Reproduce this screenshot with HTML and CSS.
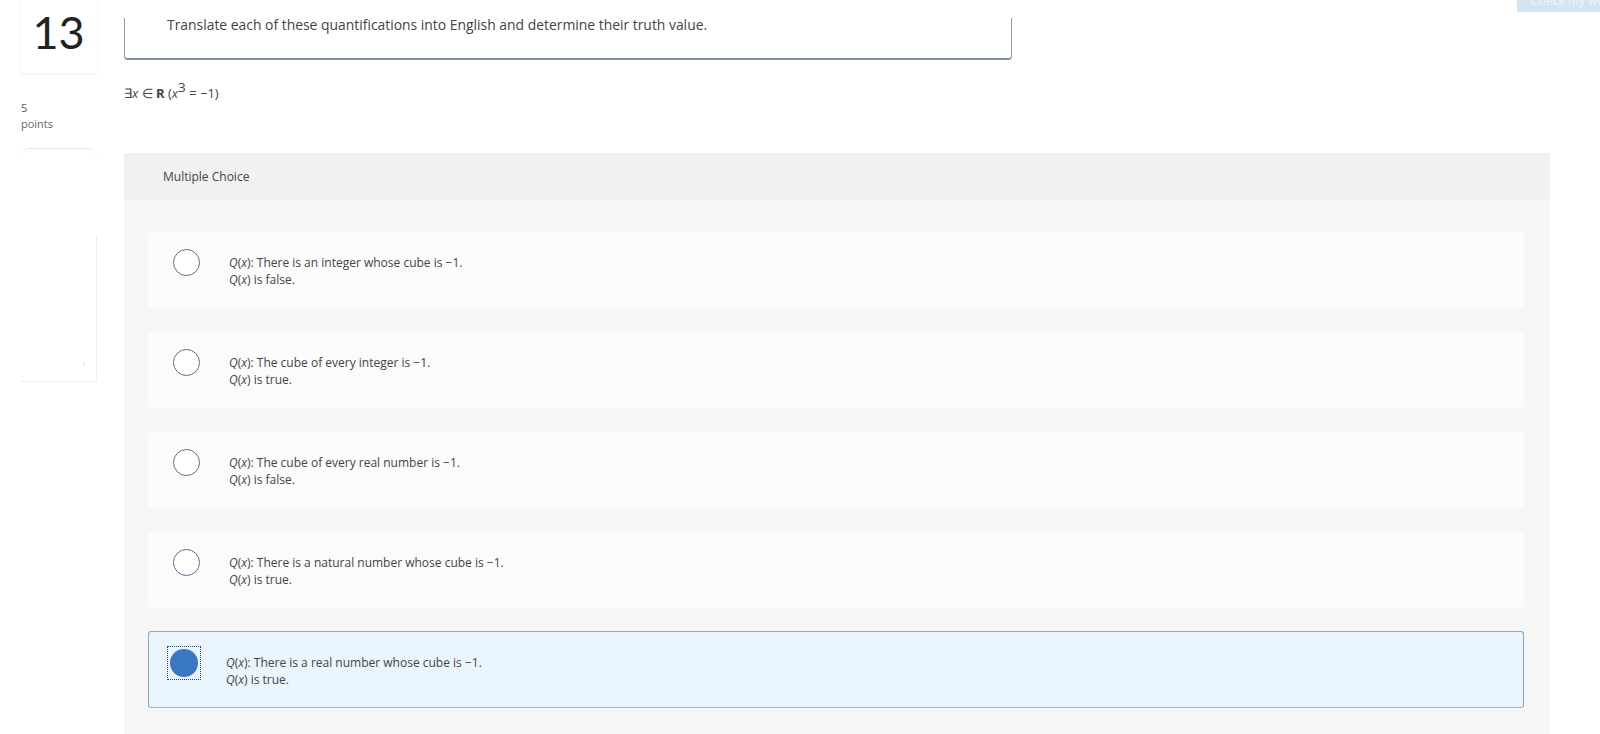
FILE: index.html
```html
<!DOCTYPE html>
<html>
<head>
<meta charset="utf-8">
<link rel="stylesheet" href="styles.css">
</head>
<body>
<div class="topbtn">Check my work</div>
<div class="page">
  <aside class="side">
    <div class="numbox">13</div>
    <div class="pts"><div class="pts-n">5</div><div class="pts-l">points</div></div>
    <div class="arc"></div>
    <div class="navbox"><span class="chev">‹</span></div>
  </aside>
  <main class="main">
    <div class="qbox">Translate each of these quantifications into English and determine their truth value.</div>
    <div class="math">∃<i>x</i> ∈ <b>R</b> (<i>x</i><sup>3</sup> = −1)</div>
    <section class="panel">
      <div class="panel-head">Multiple Choice</div>
      <div class="panel-body">
        <div class="opt">
          <span class="radio"></span>
          <div class="otext"><div><i>Q</i>(<i>x</i>): There is an integer whose cube is −1.</div><div><i>Q</i>(<i>x</i>) is false.</div></div>
        </div>
        <div class="opt">
          <span class="radio"></span>
          <div class="otext"><div><i>Q</i>(<i>x</i>): The cube of every integer is −1.</div><div><i>Q</i>(<i>x</i>) is true.</div></div>
        </div>
        <div class="opt">
          <span class="radio"></span>
          <div class="otext"><div><i>Q</i>(<i>x</i>): The cube of every real number is −1.</div><div><i>Q</i>(<i>x</i>) is false.</div></div>
        </div>
        <div class="opt">
          <span class="radio"></span>
          <div class="otext"><div><i>Q</i>(<i>x</i>): There is a natural number whose cube is −1.</div><div><i>Q</i>(<i>x</i>) is true.</div></div>
        </div>
        <div class="opt sel">
          <span class="focus"><span class="radio on"></span></span>
          <div class="otext"><div><i>Q</i>(<i>x</i>): There is a real number whose cube is −1.</div><div><i>Q</i>(<i>x</i>) is true.</div></div>
        </div>
      </div>
    </section>
  </main>
</div>
</body>
</html>
```

FILE: styles.css
```css
html, body {
  margin: 0;
  padding: 0;
  background: #ffffff;
  font-family: "Open Sans", "Liberation Sans", sans-serif;
  color: #333;
  overflow: hidden;
  height: 734px;
}
.topbtn {
  position: absolute;
  top: -10px;
  left: 1517px;
  width: 140px;
  height: 22px;
  background: #d3e4f3;
  color: #eef5fb;
  font-size: 12px;
  line-height: 22px;
  padding-left: 14px;
  white-space: nowrap;
}
.page {
  display: flex;
  align-items: flex-start;
}
.side {
  width: 124px;
  flex: none;
  padding-left: 20px;
  box-sizing: border-box;
}
.numbox {
  width: 77px;
  height: 73px;
  box-sizing: border-box;
  background: #fff;
  box-shadow: 0 1px 3px rgba(0,0,0,0.07);
  border-radius: 0 0 3px 3px;
  font-family: Lato, "Open Sans", sans-serif;
  font-size: 45px;
  font-weight: 400;
  line-height: 64px;
  text-align: center;
  color: #222;
}
.pts {
  margin-top: 27px;
  padding-left: 1px;
  font-size: 11px;
  line-height: 16px;
}
.pts-n { color: #3f5670; }
.pts-l { color: #666; }
.arc {
  margin-top: 16px;
  width: 77px;
  height: 8px;
  border-top: 1px solid #e6e6e6;
  border-radius: 40px 40px 0 0;
}
.navbox {
  margin-top: 78px;
  width: 77px;
  height: 147px;
  box-sizing: border-box;
  border-right: 1px solid #eeeeee;
  border-bottom: 1px solid #eeeeee;
  position: relative;
}
.chev {
  position: absolute;
  left: 63px;
  top: 122px;
  font-size: 8px;
  color: #bbb;
}
.main {
  flex: none;
  width: 1426px;
}
.qbox {
  margin-top: 18px;
  width: 888px;
  height: 42px;
  box-sizing: border-box;
  border: 1px solid #8e9cac;
  border-top: none;
  border-bottom: 2px solid #7d8fa3;
  border-radius: 0 0 4px 4px;
  padding: 0 0 0 42px;
  font-size: 13.9px;
  line-height: 14px;
  color: #444;
}
.math {
  margin-top: 25px;
  font-size: 13px;
  line-height: 16px;
  color: #444;
}
.math b { font-weight: 700; }
.math sup { font-size: 13.5px; line-height: 0; vertical-align: 6px; }
.panel {
  margin-top: 52px;
  background: #f6f6f6;
}
.panel-head {
  height: 47px;
  background: #f1f1f1;
  padding-left: 39px;
  font-size: 12px;
  line-height: 47px;
  color: #444;
}
.panel-body {
  padding: 31px 26px 30px 24px;
  display: flex;
  flex-direction: column;
  gap: 23px;
}
.opt {
  height: 77px;
  box-sizing: border-box;
  background: #fbfbfb;
  display: flex;
  align-items: flex-start;
  padding: 17px 0 0 24px;
  border: 1px solid transparent;
  border-radius: 3px;
}
.opt.sel {
  background: #eaf4fd;
  border: 1px solid #86aab8;
  border-bottom-color: #9ab8c6;
  padding-top: 13px;
  padding-left: 19px;
}
.radio {
  width: 27px;
  height: 27px;
  box-sizing: border-box;
  border: 1.5px solid #55718a;
  border-radius: 50%;
  background: #fff;
  flex: none;
}
.radio.on {
  border: none;
  background: #3a77c2;
  width: 28px;
  height: 28px;
}
.focus {
  flex: none;
  padding: 2px 2px;
  outline: 1.5px dotted #2b4470;
  margin-top: 2px;
  display: flex;
}
.otext {
  margin-left: 29px;
  margin-top: 5px;
  font-size: 12px;
  line-height: 17px;
  color: #444;
}
.opt.sel .otext { margin-left: 26px; margin-top: 9px; }
```
